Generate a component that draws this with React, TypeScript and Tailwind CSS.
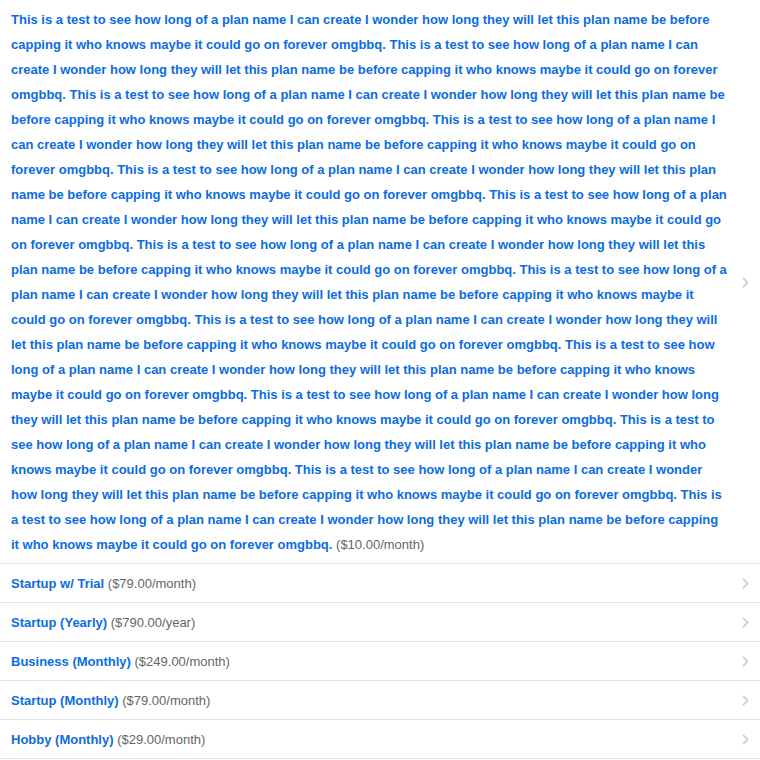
import { ChevronRight } from 'lucide-react';

const LONG_NAME = Array.from({ length: 14 })
  .map(() => 'This is a test to see how long of a plan name I can create I wonder how long they will let this plan name be before capping it who knows maybe it could go on forever omgbbq.')
  .join(' ');

const plans = [
  { name: LONG_NAME, price: '($10.00/month)' },
  { name: 'Startup w/ Trial', price: '($79.00/month)' },
  { name: 'Startup (Yearly)', price: '($790.00/year)' },
  { name: 'Business (Monthly)', price: '($249.00/month)' },
  { name: 'Startup (Monthly)', price: '($79.00/month)' },
  { name: 'Hobby (Monthly)', price: '($29.00/month)' },
];

const PlanRow = ({ name, price }: { name: string; price: string }) => (
  <div className="flex items-center border-b border-[#e3e3e3] pl-[11px] pr-[6px] pt-[7px] pb-[6px] cursor-pointer">
    <div className="flex-1 pr-[8px] text-[13px] leading-[25px]">
      <span className="font-bold text-[#0b6ce3]">{name}</span>{' '}
      <span className="text-[#666666]">{price}</span>
    </div>
    <ChevronRight size={17} strokeWidth={2.2} className="text-[#c6c6c6] shrink-0" />
  </div>
);

export default function App() {
  return (
    <div className="w-[760px] bg-white font-['Liberation_Sans',Arial,sans-serif]">
      {plans.map((p, i) => (
        <PlanRow key={i} name={p.name} price={p.price} />
      ))}
    </div>
  );
}
